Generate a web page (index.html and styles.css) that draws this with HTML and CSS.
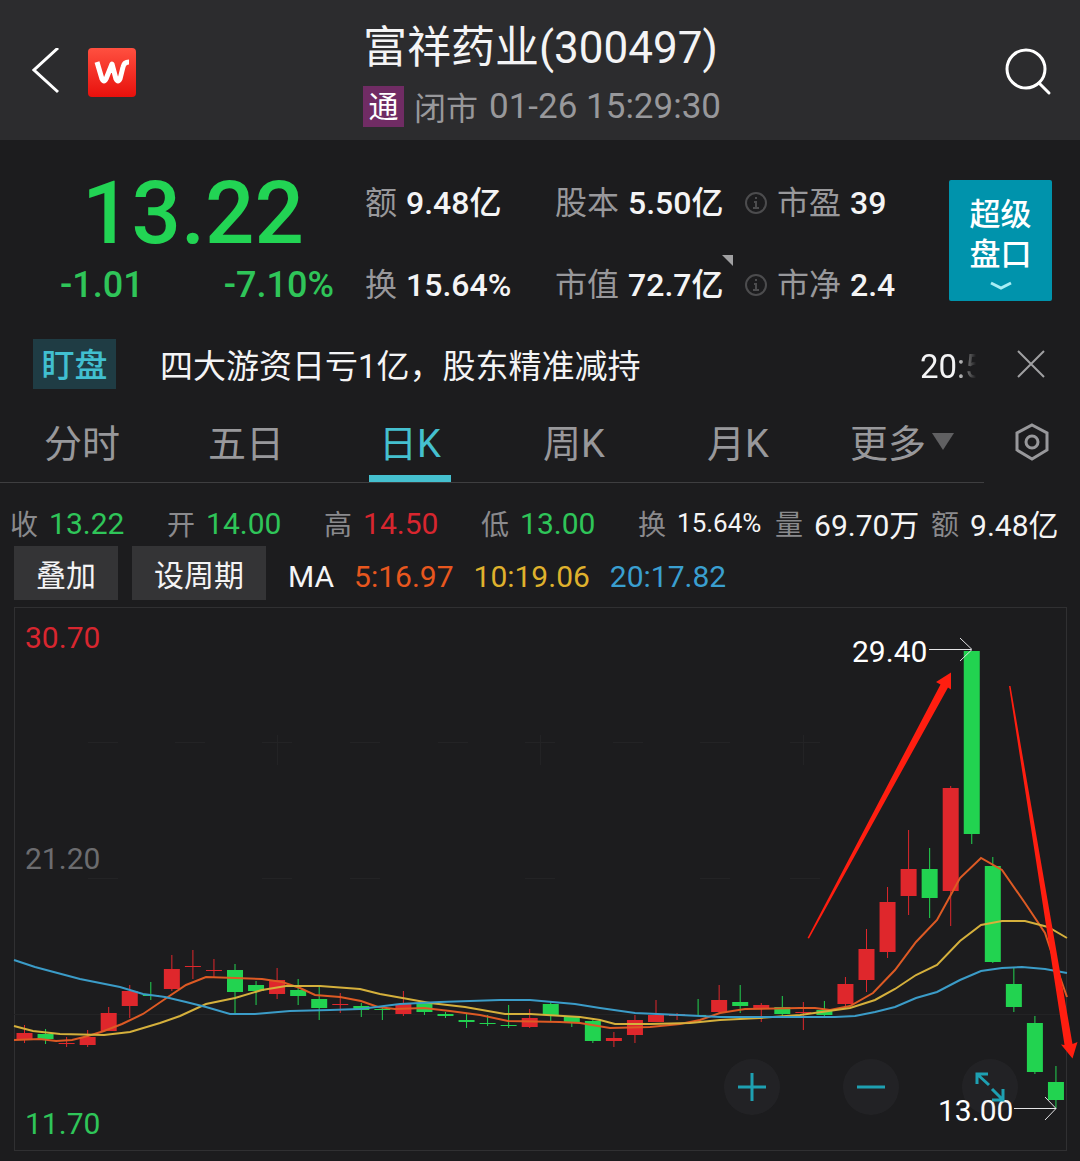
FILE: index.html
```html
<!DOCTYPE html>
<html lang="zh-CN">
<head>
    <meta charset="UTF-8">
    <meta name="viewport" content="width=device-width, initial-scale=1.0">
    <title>富祥药业(300497)</title>
    <link rel="stylesheet" href="styles.css">
</head>
<body>

<header class="top-bar">
    <div class="top-left">
        <button type="button" class="icon-btn" aria-label="返回">
            <svg width="28" height="48" viewBox="0 0 28 48"><path d="M26 0 2 22l24 22" fill="none" stroke="#fff" stroke-width="3"/></svg>
        </button>
        <svg class="logo" width="48" height="49" viewBox="0 0 48 49">
            <defs>
                <linearGradient id="logo-bg" x1="0" y1="0" x2="0" y2="1">
                    <stop offset="0" stop-color="#ff5040"/>
                    <stop offset="1" stop-color="#e8100c"/>
                </linearGradient>
            </defs>
            <rect width="48" height="49" rx="4" fill="url(#logo-bg)"/>
            <path d="M9 14 14 31Q16 35 18 31L24 16 28 31Q30 35 32 31L35 19Q36 14 41 14" fill="none" stroke="#fff" stroke-width="5" stroke-linejoin="round"/>
        </svg>
    </div>
    <div class="top-title">
        <h1>富祥药业(300497)</h1>
        <p><span class="tag-tong">通</span><span>闭市</span><time>01-26 15:29:30</time></p>
    </div>
    <div class="top-right">
        <button type="button" class="icon-btn" aria-label="搜索">
            <svg width="48" height="48" viewBox="0 0 48 48" fill="none" stroke="#fff" stroke-width="3" stroke-linecap="round"><circle cx="22" cy="21" r="19"/><path d="m35 35 10 10"/></svg>
        </button>
    </div>
</header>

<section class="quote">
    <div class="price">
        <strong>13.22</strong>
        <div class="change"><span>-1.01</span><span>-7.10%</span></div>
    </div>
    <dl class="figures">
        <div><dt>额</dt><dd>9.48亿</dd></div>
        <div><dt>股本</dt><dd>5.50亿</dd></div>
        <div>
            <svg class="info" width="22" height="22" viewBox="0 0 22 22"><circle cx="11" cy="11" r="10"/><path d="M11 5v2M9 10h2v6M8 16h6"/></svg>
            <dt>市盈</dt><dd>39</dd>
        </div>
        <div><dt>换</dt><dd>15.64%</dd></div>
        <div class="has-corner"><dt>市值</dt><dd>72.7亿</dd></div>
        <div>
            <svg class="info" width="22" height="22" viewBox="0 0 22 22"><circle cx="11" cy="11" r="10"/><path d="M11 5v2M9 10h2v6M8 16h6"/></svg>
            <dt>市净</dt><dd>2.4</dd>
        </div>
    </dl>
    <button type="button" class="super-btn">
        超级<br>盘口
        <svg width="24" height="10" viewBox="0 0 24 10"><path d="m2 2 10 5 10-5" fill="none" stroke="#a8eef5" stroke-width="3"/></svg>
    </button>
</section>

<section class="news">
    <span class="news-tag">盯盘</span>
    <a href="#">四大游资日亏1亿，股东精准减持</a>
    <time>20:5</time>
    <button type="button" class="icon-btn" aria-label="关闭">
        <svg width="30" height="30" viewBox="0 0 30 30"><path d="m2 2 26 26M28 2 2 28" stroke="#a0a0a2" stroke-width="2"/></svg>
    </button>
</section>

<nav class="period">
    <div class="tabs">
        <button type="button">分时</button>
        <button type="button">五日</button>
        <button type="button" class="active">日K</button>
        <button type="button">周K</button>
        <button type="button">月K</button>
        <button type="button">更多<i class="caret"></i></button>
    </div>
    <button type="button" class="icon-btn settings" aria-label="设置">
        <svg width="36" height="40" viewBox="0 0 36 40" fill="none" stroke="#98989b" stroke-width="3"><path d="m18 3 15 8v17l-15 9-15-9V11z"/><circle cx="18" cy="20" r="6"/></svg>
    </button>
</nav>

<dl class="ohlc">
    <div><dt>收</dt><dd class="down">13.22</dd></div>
    <div><dt>开</dt><dd class="down">14.00</dd></div>
    <div><dt>高</dt><dd class="up">14.50</dd></div>
    <div><dt>低</dt><dd class="down">13.00</dd></div>
    <div><dt>换</dt><dd class="small">15.64%</dd></div>
    <div><dt>量</dt><dd>69.70万</dd></div>
    <div><dt>额</dt><dd>9.48亿</dd></div>
</dl>

<div class="ma-bar">
    <button type="button">叠加</button>
    <button type="button">设周期</button>
    <p><span>MA</span><span class="ma5">5:16.97</span><span class="ma10">10:19.06</span><span class="ma20">20:17.82</span></p>
</div>

<main class="chart">
    <svg class="kline" viewBox="0 600 1080 561">
        <path class="frame" d="M14 607.5H1067M14 1150.5H1067M14.500 607V1150M1066.500 607V1150"/>
        <path class="grid" d="M88 742.500H118M175 742.500H205M262 742.500H292M350 742.500H380M438 742.500H468M525 742.500H555M613 742.500H643M700 742.500H730M790 742.500H820M88 878.500H118M262 878.500H292M350 878.500H380M525 878.500H555M700 878.500H730M790 878.500H820M277.500 735V765M540.500 735V765M803.500 735V765M14 1014.500H1067"/>
        <g id="candles"></g>
        <g id="averages"></g>
        <text class="up" x="25" y="648">30.70</text>
        <text class="mid" x="25" y="869">21.20</text>
        <text class="down" x="25" y="1134">11.70</text>
        <text class="mark" x="852" y="662">29.40</text>
        <path class="pointer" d="M929 649.500H971M960 638l12 11.500L960 661"/>
        <text class="mark" x="938" y="1121">13.00</text>
        <path class="pointer" d="M1014 1108.500H1056M1045 1097l11 11.500L1045 1120"/>
        <!-- rise and fall arrows -->
        <path class="trend" d="M807.500 938 940.500 684.500 936 682 951 672.500V689.500L948 687.500 809 938.500Z"/>
        <path class="trend" d="M1009 686H1010.500L1072.500 1044 1077.500 1042 1072.500 1058.500 1061 1044.500 1064.500 1045Z"/>
    </svg>
    <div class="zoom-tools">
        <button type="button" aria-label="放大"><svg width="30" height="30" viewBox="0 0 30 30"><path d="M15 1v28M1 15h28"/></svg></button>
        <button type="button" aria-label="缩小"><svg width="30" height="30" viewBox="0 0 30 30"><path d="M1 15h28"/></svg></button>
        <button type="button" aria-label="全屏"><svg width="30" height="30" viewBox="0 0 30 30"><path d="M2 12V2h11M2 2l12 11M17 17l11 11M28 17v11H17"/></svg></button>
    </div>
</main>

<script>
    // [up?, body top, body bottom, high, low]
    const candles = [
        [1, 1033, 1040, 1025, 1043], [0, 1034, 1039, 1029, 1044], [1, 1043, 1044, 1037, 1047], [1, 1037, 1045, 1030, 1047],
        [1, 1013, 1031, 1007, 1031], [1, 991, 1006, 985, 1018], [0, 995, 996, 982, 1000], [1, 969, 989, 955, 991],
        [1, 966, 967, 950, 979], [1, 970, 971, 959, 977], [0, 970, 992, 964, 1014], [0, 985, 991, 981, 1005],
        [1, 980, 994, 968, 999], [0, 990, 996, 979, 1005], [0, 999, 1008, 986, 1020], [1, 1004, 1005, 993, 1013],
        [0, 1006, 1010, 1003, 1017], [0, 1009, 1010, 1007, 1020], [1, 1004, 1014, 991, 1016], [0, 1003, 1012, 1002, 1015],
        [0, 1014, 1016, 1012, 1018], [0, 1020, 1022, 1014, 1028], [0, 1023, 1024, 1015, 1026], [0, 1025, 1026, 1005, 1028],
        [1, 1018, 1027, 1009, 1028], [0, 1004, 1015, 1002, 1021], [0, 1017, 1023, 1016, 1027], [0, 1021, 1041, 1020, 1043],
        [1, 1038, 1041, 1032, 1047], [1, 1020, 1035, 1015, 1043], [1, 1015, 1022, 1000, 1022], [1, 1014, 1016, 1013, 1020],
        [0, 1015, 1016, 999, 1016], [1, 1000, 1012, 985, 1013], [0, 1002, 1006, 985, 1013], [1, 1005, 1008, 1003, 1022],
        [0, 1007, 1014, 996, 1016], [1, 1012, 1013, 1002, 1030], [0, 1010, 1015, 1001, 1017], [1, 984, 1004, 977, 1006],
        [1, 949, 980, 929, 992], [1, 902, 952, 887, 958], [1, 869, 896, 830, 915], [0, 869, 898, 848, 918],
        [1, 788, 891, 786, 926], [0, 651, 834, 651, 844], [0, 866, 962, 857, 963], [0, 984, 1007, 968, 1012],
        [0, 1023, 1072, 1016, 1074], [0, 1082, 1100, 1066, 1108]
    ];

    const averages = {
        ma5: '14,1040 40,1039 56,1041 72,1040 88,1036 104,1031 122,1024 143,1014 165,999 186,985 206,977 235,978 262,979 282,982 300,988 315,995 340,997 361,1001 378,1007 395,1009 424,1008 450,1011 480,1015 508,1021 560,1022 580,1023 610,1028 650,1027 680,1024 700,1020 720,1013 745,1009 800,1008 815,1008 830,1010 850,1006 873,993 895,970 916,942 937,920 948,900 960,878 981,858 1002,870 1025,903 1045,933 1054,960 1067,997',
        ma10: '14,1026 33,1031 60,1034 104,1035 130,1032 160,1023 180,1016 206,1004 235,998 262,990 286,986 320,986 360,989 380,994 408,999 430,1003 465,1007 505,1014 530,1014 580,1017 600,1020 615,1024 650,1024 690,1023 720,1020 760,1018 800,1015 850,1008 875,1000 895,989 916,975 937,965 960,941 981,925 1002,921 1025,921 1048,927 1067,938',
        ma20: '14,960 35,967 80,979 120,987 143,994 165,997 186,1002 206,1007 230,1014 255,1014 290,1011 330,1010 360,1009 400,1004 440,1002 500,1000 530,1000 575,1004 600,1008 635,1013 680,1015 720,1017 780,1017 835,1017 855,1016 875,1012 895,1007 916,998 937,992 960,980 981,971 1002,968 1022,967 1045,969 1067,973'
    };

    document.getElementById('candles').innerHTML = candles.map((c, i) => {
        const x = 24.5 + i * 21.05;
        return `<g class="${c[0] ? 'candle-up' : 'candle-down'}">
            <path d="M${x} ${c[3]}V${c[4]}"/>
            <rect x="${x - 8}" y="${c[1]}" width="16" height="${c[2] - c[1]}"/>
        </g>`;
    }).join('');

    document.getElementById('averages').innerHTML = Object.keys(averages).map(name =>
        `<polyline class="line-${name}" points="${averages[name]}"/>`
    ).join('');
</script>

</body>
</html>
```
FILE: styles.css
```css
* {
    box-sizing: border-box;
}
body {
    margin: 0;
    background-color: #1c1c1e;
    color: #f4f4f5;
    font-family: Roboto, "Noto Sans CJK SC", sans-serif;
}
h1, p, dl, dd {
    margin: 0;
}
button {
    padding: 0;
    border: none;
    background: none;
    color: inherit;
    font-family: inherit;
    cursor: pointer;
}
svg {
    display: block;
}
.up {
    color: #d8262f;
    fill: #d8262f;
}
.down {
    color: #2fc559;
    fill: #2fc559;
}

/* top bar */
.top-bar {
    display: grid;
    grid-template-columns: 1fr auto 1fr;
    height: 140px;
    padding: 0 28px 0 32px;
    background-color: #2c2c2e;
}
.top-left, .top-right {
    display: flex;
    align-items: center;
    height: 144px;
}
.top-left {
    gap: 28px;
}
.top-right {
    justify-content: flex-end;
}
.top-title {
    padding-top: 18px;
}
.top-title h1 {
    font-size: 44px;
    font-weight: 400;
    line-height: 60px;
}
.top-title p {
    display: flex;
    align-items: center;
    height: 56px;
    color: #98989b;
    font-size: 32px;
}
.top-title time {
    margin-left: 11px;
    font-size: 35px;
}
.tag-tong {
    width: 41px;
    margin-right: 10px;
    background-color: #702c64;
    color: #fff;
    font-size: 30px;
    line-height: 41px;
    text-align: center;
}

/* quote */
.quote {
    display: flex;
    align-items: flex-start;
    height: 180px;
    padding: 0 28px 0 60px;
}
.price {
    width: 274px;
    padding-top: 25px;
    color: #22d454;
}
.price strong {
    display: block;
    padding-left: 22px;
    font-size: 87px;
    font-weight: 500;
    line-height: 96px;
}
.change {
    display: flex;
    justify-content: space-between;
    font-size: 36px;
    font-weight: 500;
    line-height: 48px;
    color: #2fc559;
}
.figures {
    flex: 1;
    display: grid;
    grid-template-columns: 190px 190px 1fr;
    row-gap: 34px;
    padding-top: 39px;
    padding-left: 31px;
    line-height: 48px;
}
.figures div {
    display: flex;
    align-items: center;
    white-space: nowrap;
}
.figures dt {
    margin-right: 9px;
    color: #98989b;
    font-size: 32px;
}
.figures dd {
    font-size: 32px;
    font-weight: 500;
}
.info {
    margin-right: 10px;
    fill: none;
    stroke: #4c4c4e;
    stroke-width: 2;
}
.has-corner {
    position: relative;
}
.has-corner::after {
    content: "";
    position: absolute;
    top: -6px;
    right: 12px;
    border-top: 11px solid #a0a0a2;
    border-left: 11px solid transparent;
}
.super-btn {
    width: 103px;
    height: 121px;
    margin-top: 40px;
    padding-top: 4px;
    border-radius: 2px;
    background-color: #0093ac;
    color: #fff;
    font-size: 31px;
    font-weight: 500;
    line-height: 40px;
}
.super-btn svg {
    margin: 6px auto 0;
}

/* news line */
.news {
    display: flex;
    align-items: center;
    height: 88px;
    padding: 0 34px 0 33px;
    font-size: 33px;
}
.news-tag {
    width: 83px;
    margin-right: 44px;
    padding-top: 4px;
    background-color: #1f3c44;
    color: #41bfd0;
    font-weight: 500;
    line-height: 46px;
    text-align: center;
}
.news a {
    flex: 1;
    color: inherit;
    text-decoration: none;
    white-space: nowrap;
}
.news time {
    width: 66px;
    margin-right: 30px;
    padding-top: 4px;
    -webkit-mask-image: linear-gradient(to right, #000 34px, transparent 56px);
    mask-image: linear-gradient(to right, #000 34px, transparent 56px);
}

/* period tabs */
.period {
    display: flex;
    height: 75px;
}
.tabs {
    flex: 1;
    display: flex;
    border-bottom: 1px solid #3e3e40;
}
.tabs button {
    position: relative;
    flex: 1;
    padding-bottom: 10px;
    color: #98989b;
    font-size: 38px;
    white-space: nowrap;
}
.tabs .active {
    color: #45c0cf;
}
.tabs .active::after {
    content: "";
    position: absolute;
    bottom: 0;
    left: 25%;
    width: 50%;
    height: 7px;
    background-color: #45c0cf;
}
.caret {
    display: inline-block;
    margin-left: 6px;
    border-top: 17px solid #606062;
    border-left: 11px solid transparent;
    border-right: 11px solid transparent;
    vertical-align: 7px;
}
.settings {
    display: flex;
    justify-content: center;
    width: 96px;
    padding-top: 14px;
}

/* day figures */
.ohlc {
    display: grid;
    grid-template-columns: 157fr 157fr 157fr 157fr 137fr 156fr 139fr;
    height: 63px;
    padding: 17px 10px 0;
}
.ohlc div {
    display: flex;
    align-items: center;
    gap: 11px;
    height: 46px;
    white-space: nowrap;
}
.ohlc dt {
    color: #8a8a8d;
    font-size: 28px;
}
.ohlc dd {
    font-size: 30px;
}
.ohlc .small {
    font-size: 26px;
}
.ma-bar {
    display: flex;
    align-items: center;
    gap: 14px;
    height: 54px;
    padding-left: 14px;
    font-size: 30px;
}
.ma-bar button {
    height: 54px;
    padding: 0 22px;
    background-color: #343436;
    font-size: 30px;
}
.ma-bar p {
    display: flex;
    gap: 20px;
    padding: 6px 0 0 8px;
}
.ma5 {
    color: #e8571e;
}
.ma10 {
    color: #dfb12d;
}
.ma20 {
    color: #3a9fd0;
}

/* chart */
.chart {
    position: relative;
}
.kline {
    width: 100%;
    font-size: 30px;
}
.frame {
    fill: none;
    stroke: #303032;
}
.grid {
    fill: none;
    stroke: #232325;
}
.mid {
    fill: #6c6c6f;
}
.mark {
    fill: #fff;
}
.pointer {
    fill: none;
    stroke: #e4e4e6;
}
.trend {
    fill: #ff1e10;
}
.candle-up {
    fill: #df272c;
    stroke: #df272c;
}
.candle-down {
    fill: #22d350;
    stroke: #22d350;
}
.candle-up rect, .candle-down rect {
    stroke: none;
}
.line-ma5, .line-ma10, .line-ma20 {
    fill: none;
    stroke-width: 2;
}
.line-ma5 {
    stroke: #dd5a24;
}
.line-ma10 {
    stroke: #d5b03c;
}
.line-ma20 {
    stroke: #3b9cc8;
}
.zoom-tools {
    position: absolute;
    right: 62px;
    bottom: 46px;
    display: flex;
    gap: 63px;
}
.zoom-tools button {
    display: flex;
    align-items: center;
    justify-content: center;
    width: 56px;
    height: 56px;
    border-radius: 50%;
    background-color: rgba(120, 120, 130, 0.08);
}
.zoom-tools svg {
    fill: none;
    stroke: #1ea0b2;
    stroke-width: 3;
}
```
